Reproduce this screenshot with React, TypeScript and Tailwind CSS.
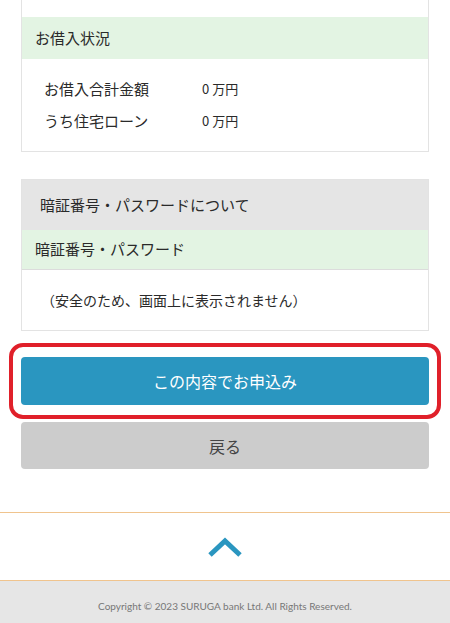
export default function App() {
  return (
    <div className="min-h-[623px] bg-white font-['Noto_Sans_CJK_JP','Noto_Sans',sans-serif] text-[#2a2a2a]">
      <div className="px-[21px]">
        {/* お借入状況 */}
        <section className="border border-t-0 border-[#e3e3e3]">
          <div className="h-[17px]" />
          <div className="flex h-[42px] items-center bg-[#e3f4e3] px-[13px] text-[15px]">
            お借入状況
          </div>
          <div className="px-[22px] pb-[14px] pt-[14px] text-[15px]">
            <div className="flex h-[32px] items-center">
              <span className="w-[158px]">お借入合計金額</span>
              <span className="text-[13px]">0 万円</span>
            </div>
            <div className="flex h-[32px] items-center">
              <span className="w-[158px]">うち住宅ローン</span>
              <span className="text-[13px]">0 万円</span>
            </div>
          </div>
        </section>

        {/* 暗証番号 */}
        <section className="mt-[27px] border border-[#e3e3e3]">
          <div className="flex h-[50px] items-center bg-[#e5e5e5] px-[18px] text-[15px]">
            暗証番号・パスワードについて
          </div>
          <div className="flex h-[40px] items-center border-b border-[#dcdcdc] bg-[#e3f4e3] px-[13px] text-[15px]">
            暗証番号・パスワード
          </div>
          <div className="flex h-[60px] items-center pl-[19px] pr-[14px] text-[14px]">
            （安全のため、画面上に表示されません）
          </div>
        </section>

        <div className="-mx-3 mt-[12px] rounded-[14px] border-4 border-[#e0202a] px-[8px] py-[10px]">
          <button className="flex h-[48px] w-full items-center justify-center rounded-[4px] bg-[#2a96c0] text-[16px] text-white">
            この内容でお申込み
          </button>
        </div>

        <button className="mt-[3px] flex h-[47px] w-full items-center justify-center rounded-[4px] bg-[#cccccc] text-[16px] text-[#444]">
          戻る
        </button>
      </div>

      <div className="mt-[43px] flex h-[69px] items-center justify-center border-y border-[#f0c48e]">
        <svg width="34" height="22" viewBox="0 0 34 22">
          <path d="M2 19 L17 5 L32 19" fill="none" stroke="#2a96c0" strokeWidth="5" />
        </svg>
      </div>

      <footer className="bg-[#e6e6e6] pb-[9px] pt-[18px] text-center font-['Lato',sans-serif] text-[10px] text-[#777]">
        Copyright © 2023 SURUGA bank Ltd. All Rights Reserved.
      </footer>
    </div>
  );
}
